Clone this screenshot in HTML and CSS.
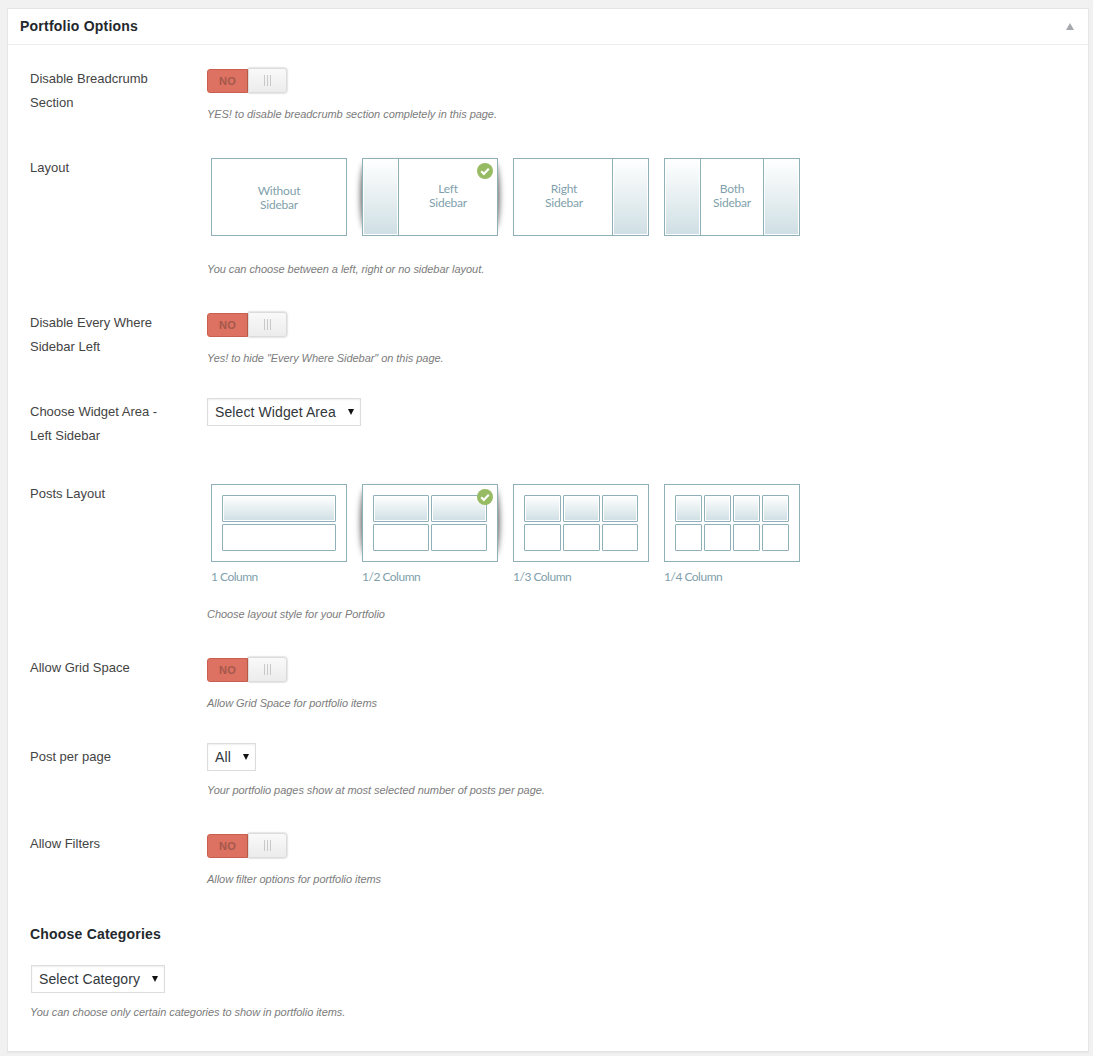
FILE: index.html
```html
<!DOCTYPE html>
<html lang="en">
<head>
    <meta charset="UTF-8">
    <title>Portfolio Options</title>
    <link rel="stylesheet" href="styles.css">
</head>
<body>
    <section class="panel">
        <header class="panel-head">
            <h2>Portfolio Options</h2>
            <span class="panel-arrow"></span>
        </header>
        <div class="panel-body">
            <div class="row row-breadcrumb">
                <div class="row-label">Disable Breadcrumb Section</div>
                <div class="row-field">
                    <div class="toggle"><span class="toggle-no">NO</span><span class="toggle-knob"><i></i><i></i><i></i></span></div>
                    <p class="hint">YES! to disable breadcrumb section completely in this page.</p>
                </div>
            </div>
            <div class="row row-layout">
                <div class="row-label">Layout</div>
                <div class="row-field">
                    <div class="thumbs">
                        <div class="thumb"><div class="pane pane-text pane-low">Without<br>Sidebar</div></div>
                        <div class="thumb selected">
                            <div class="pane side"></div><div class="pane pane-text">Left<br>Sidebar</div>
                            <span class="check"><svg viewBox="0 0 16 16" width="16" height="16"><path d="M4.2 8.3l2.6 2.6 5-5.2" fill="none" stroke="#fff" stroke-width="2.2"/></svg></span>
                        </div>
                        <div class="thumb"><div class="pane pane-text pane-right">Right<br>Sidebar</div><div class="pane side side-right"></div></div>
                        <div class="thumb"><div class="pane side"></div><div class="pane pane-text">Both<br>Sidebar</div><div class="pane side side-right"></div></div>
                    </div>
                    <p class="hint hint-layout">You can choose between a left, right or no sidebar layout.</p>
                </div>
            </div>
            <div class="row row-everywhere">
                <div class="row-label">Disable Every Where Sidebar Left</div>
                <div class="row-field">
                    <div class="toggle"><span class="toggle-no">NO</span><span class="toggle-knob"><i></i><i></i><i></i></span></div>
                    <p class="hint">Yes! to hide "Every Where Sidebar" on this page.</p>
                </div>
            </div>
            <div class="row row-widget">
                <div class="row-label">Choose Widget Area - Left Sidebar</div>
                <div class="row-field">
                    <div class="select">Select Widget Area<span class="select-arrow"></span></div>
                </div>
            </div>
            <div class="row row-posts">
                <div class="row-label">Posts Layout</div>
                <div class="row-field">
                    <div class="thumbs">
                        <figure class="col-option">
                            <div class="thumb grid-thumb cols-1"><b class="on"></b><b></b></div>
                            <figcaption>1 Column</figcaption>
                        </figure>
                        <figure class="col-option">
                            <div class="thumb grid-thumb cols-2 selected">
                                <b class="on"></b><b class="on"></b><b></b><b></b>
                                <span class="check"><svg viewBox="0 0 16 16" width="16" height="16"><path d="M4.2 8.3l2.6 2.6 5-5.2" fill="none" stroke="#fff" stroke-width="2.2"/></svg></span>
                            </div>
                            <figcaption>1/2 Column</figcaption>
                        </figure>
                        <figure class="col-option">
                            <div class="thumb grid-thumb cols-3"><b class="on"></b><b class="on"></b><b class="on"></b><b></b><b></b><b></b></div>
                            <figcaption>1/3 Column</figcaption>
                        </figure>
                        <figure class="col-option">
                            <div class="thumb grid-thumb cols-4"><b class="on"></b><b class="on"></b><b class="on"></b><b class="on"></b><b></b><b></b><b></b><b></b></div>
                            <figcaption>1/4 Column</figcaption>
                        </figure>
                    </div>
                    <p class="hint hint-posts">Choose layout style for your Portfolio</p>
                </div>
            </div>
            <div class="row row-grid">
                <div class="row-label">Allow Grid Space</div>
                <div class="row-field">
                    <div class="toggle"><span class="toggle-no">NO</span><span class="toggle-knob"><i></i><i></i><i></i></span></div>
                    <p class="hint">Allow Grid Space for portfolio items</p>
                </div>
            </div>
            <div class="row row-perpage">
                <div class="row-label">Post per page</div>
                <div class="row-field">
                    <div class="select">All<span class="select-arrow"></span></div>
                    <p class="hint hint-select">Your portfolio pages show at most selected number of posts per page.</p>
                </div>
            </div>
            <div class="row row-filters">
                <div class="row-label">Allow Filters</div>
                <div class="row-field">
                    <div class="toggle"><span class="toggle-no">NO</span><span class="toggle-knob"><i></i><i></i><i></i></span></div>
                    <p class="hint">Allow filter options for portfolio items</p>
                </div>
            </div>
            <div class="categories">
                <h3>Choose Categories</h3>
                <div class="select">Select Category<span class="select-arrow"></span></div>
                <p class="hint hint-select">You can choose only certain categories to show in portfolio items.</p>
            </div>
        </div>
    </section>
</body>
</html>
```

FILE: styles.css
```css
* {
    padding: 0;
    margin: 0;
    box-sizing: border-box;
    font-family: "Liberation Sans", Arial, sans-serif;
}
:root {
    --line: #8fb0b8;
    --thumbtext: #7f9fac;
}
body {
    background-color: #f1f1f1;
    padding: 8px 4px 4px 7px;
    height: 1056px;
    overflow: hidden;
}
.panel {
    background-color: #fff;
    border: 1px solid #e5e5e5;
    box-shadow: 0 1px 1px rgba(0,0,0,.04);
    height: 1044px;
}
.panel-head {
    height: 36px;
    border-bottom: 1px solid #eee;
    padding: 0 12px 2px;
    display: flex;
    align-items: center;
    justify-content: space-between;
}
.panel-head h2 {
    font-size: 14px;
    line-height: 32px;
    color: #23282d;
    font-weight: 700;
    letter-spacing: .22px;
}
.panel-arrow {
    width: 0;
    height: 0;
    border-left: 4px solid transparent;
    border-right: 4px solid transparent;
    border-bottom: 7px solid #a5a8ad;
    margin-right: 2px;
    margin-top: 2px;
}
.panel-body {
    padding: 0 22px;
}
.row {
    display: flex;
}
.row-label {
    width: 177px;
    flex: none;
    padding-right: 30px;
    font-size: 13px;
    line-height: 24px;
    color: #444;
}
.row-breadcrumb { padding-top: 22px; height: 113px; }
.row-layout { height: 131px; }
.row-everywhere { padding-top: 22px; height: 111px; }
.row-widget { height: 84px; }
.row-posts { height: 172px; }
.row-grid { height: 89px; }
.row-perpage { height: 87px; }
.row-filters { height: 93px; }

.row-layout .row-label { margin-top: -2px; }
.row-posts .row-label { margin-top: -2px; }
.row .select { margin-top: -2px; }

.hint {
    font-size: 11px;
    font-style: italic;
    line-height: 14px;
    color: #7c7c7c;
    margin-top: 13px;
    letter-spacing: -.05px;
}
.hint-layout { margin-top: 26px; }
.hint-posts { margin-top: 23px; }
.hint-select { margin-top: 12px; }

.toggle {
    width: 80px;
    height: 25px;
    margin-top: 2px;
    display: flex;
}
.toggle-no {
    width: 41px;
    height: 24px;
    background-color: #dd7262;
    border: 1px solid #c9604f;
    border-radius: 3px 0 0 3px;
    color: #a5584c;
    font-size: 11px;
    font-weight: 700;
    line-height: 22px;
    text-align: center;
    letter-spacing: .2px;
}
.toggle-knob {
    width: 39px;
    height: 25px;
    margin-top: -1px;
    background-image: linear-gradient(#f9f9f9, #ececec);
    border: 1px solid #dcdcdc;
    border-radius: 0 3px 3px 0;
    box-shadow: 0 0 2px rgba(0,0,0,.35);
    display: flex;
    align-items: center;
    justify-content: center;
    gap: 2px;
}
.toggle-knob i {
    width: 1px;
    height: 11px;
    background-color: #c8c8c8;
}
.thumbs {
    display: flex;
    gap: 15px;
    padding-left: 4px;
}
.thumb {
    width: 136px;
    height: 78px;
    border: 1px solid var(--line);
    background-color: #fff;
    display: flex;
    position: relative;
}
.thumb.selected::before {
    content: "";
    position: absolute;
    top: 6px;
    bottom: 8px;
    left: 0;
    right: 0;
    box-shadow: 0 0 6px 2px rgba(0,0,0,.7);
    border-radius: 4px / 34px;
    z-index: -1;
}
.row-layout, .row-posts {
    position: relative;
    z-index: 0;
}
.pane {
    height: 100%;
}
.pane-text {
    flex: 1;
    display: flex;
    align-items: center;
    justify-content: center;
    text-align: center;
    font-family: Lato, "Open Sans", sans-serif;
    font-size: 12px;
    line-height: 14px;
    letter-spacing: -.2px;
    color: var(--thumbtext);
    padding-bottom: 2px;
    background-color: #fff;
}
.pane-low { padding: 2px 0 0; }
.pane-right { padding-left: 2px; }
.side {
    width: 36px;
    flex: none;
    border-right: 1px solid var(--line);
    background-image: linear-gradient(#fff, #cfdfe4);
    box-shadow: inset 0 0 0 1px #fff;
}
.side-right {
    border-right: 0;
    border-left: 1px solid var(--line);
}
.check {
    position: absolute;
    top: 4px;
    right: 4px;
    width: 16px;
    height: 16px;
    border-radius: 50%;
    background-color: #97bb63;
    display: block;
}
.check svg {
    display: block;
}
.col-option figcaption {
    font-family: Lato, "Open Sans", sans-serif;
    font-size: 12px;
    line-height: 14px;
    color: var(--thumbtext);
    margin: 8px 0 0;
    letter-spacing: -.5px;
}
.grid-thumb {
    display: grid;
    gap: 2px;
    grid-template-rows: 27px 27px;
    align-content: center;
    padding: 0 10px;
}
.cols-1 { grid-template-columns: 1fr; }
.cols-2 { grid-template-columns: repeat(2, 56px); }
.cols-3 { grid-template-columns: 37px 37px 36px; padding-right: 0; }
.cols-4 { grid-template-columns: repeat(4, 27px); }
.grid-thumb b {
    border: 1px solid var(--line);
    border-radius: 1px;
    background-color: #fff;
    display: block;
}
.grid-thumb b.on {
    background-image: linear-gradient(#fff, #cfdfe4);
    box-shadow: inset 0 0 0 1px #fff;
}
.select {
    display: inline-flex;
    align-items: center;
    height: 28px;
    padding: 0 6px 0 7px;
    border: 1px solid #ddd;
    font-size: 14px;
    color: #32373c;
    background-color: #fff;
    box-shadow: inset 0 1px 2px rgba(0,0,0,.07);
    letter-spacing: .1px;
}
.select-arrow {
    width: 0;
    height: 0;
    border-left: 3px solid transparent;
    border-right: 3px solid transparent;
    border-top: 6px solid #111;
    margin-left: 12px;
}
.categories h3 {
    font-size: 14px;
    line-height: 18px;
    color: #23282d;
    letter-spacing: .2px;
    margin-bottom: 22px;
}
.categories .select {
    margin-left: 1px;
    display: flex;
    width: fit-content;
}
```
